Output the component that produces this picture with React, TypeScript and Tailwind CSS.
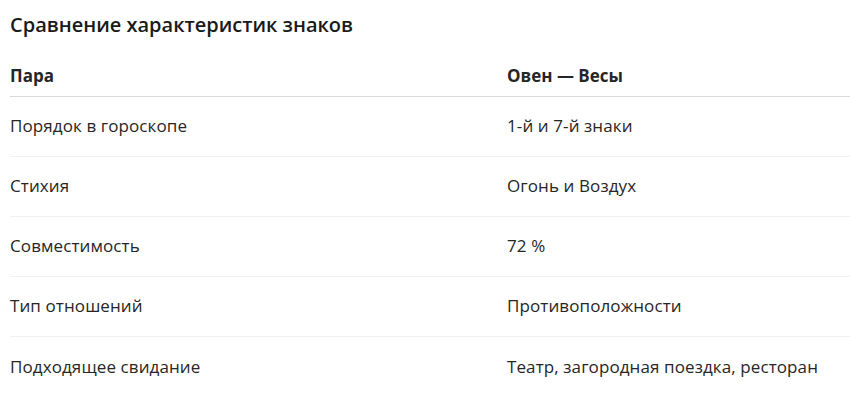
const rows = [
  { label: "Порядок в гороскопе", value: "1-й и 7-й знаки" },
  { label: "Стихия", value: "Огонь и Воздух" },
  { label: "Совместимость", value: "72 %" },
  { label: "Тип отношений", value: "Противоположности" },
  { label: "Подходящее свидание", value: "Театр, загородная поездка, ресторан" },
];

const App = () => {
  return (
    <div className="w-[850px] h-[408px] overflow-hidden bg-white font-['Open_Sans',sans-serif] text-[#262626]">
      <div className="pl-[10px] pt-[11px]">
        <h2 className="text-[20px] leading-[28px] font-semibold text-[#1a1a1a]">
          Сравнение характеристик знаков
        </h2>
        <table className="mt-[17px] w-[994px] border-collapse text-left">
          <thead>
            <tr className="border-b border-[#d9d9d9]">
              <th className="w-[497px] h-[40px] p-0 text-[17px] font-bold align-middle">Пара</th>
              <th className="h-[40px] p-0 text-[17px] font-bold align-middle">Овен — Весы</th>
            </tr>
          </thead>
          <tbody>
            {rows.map((row, i) => (
              <tr
                key={row.label}
                className={i < rows.length - 1 ? "border-b border-[#f0f0f0]" : ""}
              >
                <td className="h-[60px] p-0 text-[17px] tracking-[0.1px] align-middle">{row.label}</td>
                <td className="h-[60px] p-0 text-[17px] tracking-[0.1px] align-middle">{row.value}</td>
              </tr>
            ))}
          </tbody>
        </table>
      </div>
    </div>
  );
};

export default App;
